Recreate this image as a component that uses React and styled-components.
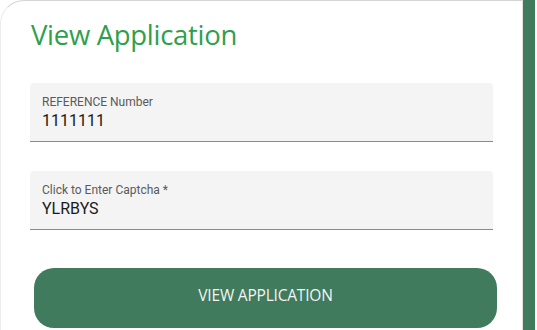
import React from "react";
import styled, { createGlobalStyle } from "styled-components";

const Global = createGlobalStyle`
  html, body { margin: 0; padding: 0; background: #fff; }
  body { font-family: "Roboto", "Liberation Sans", sans-serif; overflow: hidden; }
`;

const Page = styled.div`
  display: flex;
  width: 537px;
  height: 330px;
  overflow: hidden;
  background: #fff;
`;

const Card = styled.div`
  box-sizing: border-box;
  width: 523px;
  height: 330px;
  border-top: 1px solid #d4d4d4;
  border-left: 1px solid #ececec;
  border-right: 1px solid #e0e0e0;
  border-top-left-radius: 24px;
  background: #fff;
  padding: 14px 0 0 29px;
  display: flex;
  flex-direction: column;
`;

const Strip = styled.div`
  width: 12px;
  height: 330px;
  background: #3f7b5c;
`;

const Title = styled.h1`
  margin: 0 0 28px 1px;
  font-family: "Open Sans", "Noto Sans", sans-serif;
  font-weight: 400;
  font-size: 27.5px;
  line-height: 40px;
  letter-spacing: -0.3px;
  color: #2f9f4c;
`;

const Field = styled.div`
  box-sizing: border-box;
  width: 463px;
  height: 59px;
  flex-shrink: 0;
  background: #f4f4f4;
  border-bottom: 1px solid #8a8a8a;
  border-radius: 4px 4px 0 0;
  padding: 12px 12px 0 12px;
  display: flex;
  flex-direction: column;
  margin-bottom: ${(p) => p.$gap}px;
`;

const Label = styled.span`
  font-size: 12px;
  line-height: 15px;
  color: #5a5a5a;
`;

const Value = styled.span`
  font-size: 16px;
  line-height: 22px;
  color: #1a1a1a;
`;

const Button = styled.button`
  box-sizing: border-box;
  width: 463px;
  height: 60px;
  flex-shrink: 0;
  margin-left: 4px;
  padding: 0 0 6px 0;
  border: none;
  border-radius: 20px;
  background: #3f7b5c;
  color: #f4f4f4;
  font-family: "Open Sans", "Noto Sans", sans-serif;
  font-size: 15.5px;
  letter-spacing: -0.2px;
  cursor: pointer;
`;

export default function App() {
  return (
    <>
      <Global />
      <Page>
        <Card>
          <Title>View Application</Title>
          <Field $gap={29}>
            <Label>REFERENCE Number</Label>
            <Value>1111111</Value>
          </Field>
          <Field $gap={38}>
            <Label>Click to Enter Captcha *</Label>
            <Value>YLRBYS</Value>
          </Field>
          <Button>VIEW APPLICATION</Button>
        </Card>
        <Strip />
      </Page>
    </>
  );
}
